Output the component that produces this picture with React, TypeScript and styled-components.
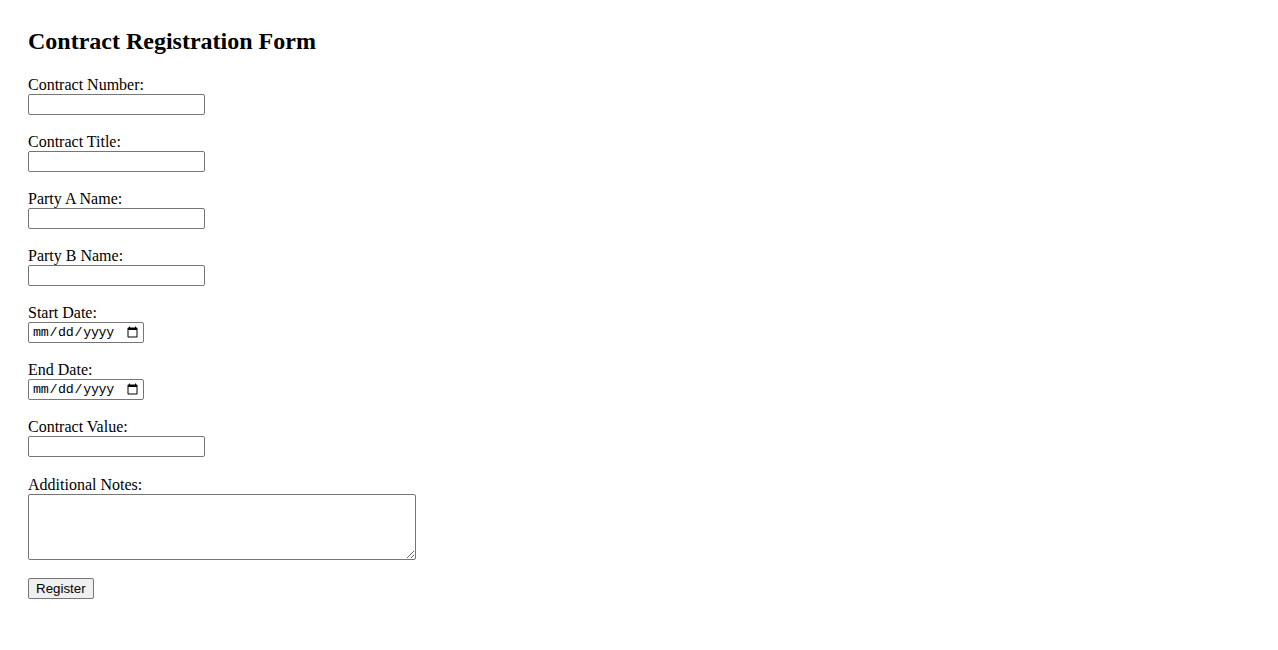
import React from "react";
import styled, { createGlobalStyle } from "styled-components";

const GlobalStyle = createGlobalStyle`
  html, body {
    background: #ffffff;
  }
  body {
    margin: 8px;
    font-family: "Liberation Serif", "Times New Roman", serif;
    font-size: 16px;
    color: #000000;
  }
`;

const Page = styled.div`
  padding: 20px;
`;

const Title = styled.h2`
  margin: 0 0 20.9px;
  font-size: 24px;
  font-weight: bold;
  line-height: normal;
`;

const Form = styled.form`
  display: flex;
  flex-direction: column;
  align-items: flex-start;
`;

const Field = styled.div`
  display: flex;
  flex-direction: column;
  align-items: flex-start;
  margin-bottom: 18.1px;
`;

const Label = styled.label`
  display: block;
  line-height: normal;
`;

const controlBase = `
  box-sizing: border-box;
  margin: 0;
  border: 1px solid #767676;
  border-radius: 2px;
  background: #ffffff;
  color: #000000;
  outline: none;
`;

const TextInput = styled.input`
  ${controlBase}
  width: 177px;
  height: 21px;
  padding: 1px 2px;
  font-family: "Liberation Sans", Arial, sans-serif;
  font-size: 13.333px;
`;

const DateInput = styled.input`
  ${controlBase}
  width: 116px;
  height: 21px;
  padding: 1px 2px 1px 3px;
  font-family: "Liberation Mono", "DejaVu Sans Mono", monospace;
  font-size: 13.333px;
  letter-spacing: -0.3px;
`;

const TextArea = styled.textarea`
  ${controlBase}
  width: 388px;
  height: 66px;
  padding: 2px;
  font-family: "Liberation Mono", monospace;
  font-size: 13.333px;
`;

const SubmitButton = styled.button`
  box-sizing: border-box;
  height: 21px;
  margin: 0;
  padding: 1px 7px;
  border: 1px solid #767676;
  border-radius: 2px;
  background: #efefef;
  color: #000000;
  font-family: "Liberation Sans", Arial, sans-serif;
  font-size: 13.333px;
  line-height: normal;
`;

const fields: { id: string; label: string; type: "text" | "date" }[] = [
  { id: "contractNumber", label: "Contract Number:", type: "text" },
  { id: "contractTitle", label: "Contract Title:", type: "text" },
  { id: "partyA", label: "Party A Name:", type: "text" },
  { id: "partyB", label: "Party B Name:", type: "text" },
  { id: "startDate", label: "Start Date:", type: "date" },
  { id: "endDate", label: "End Date:", type: "date" },
  { id: "contractValue", label: "Contract Value:", type: "text" },
];

export default function App() {
  return (
    <>
      <GlobalStyle />
      <Page>
        <Title>Contract Registration Form</Title>
        <Form onSubmit={(e) => e.preventDefault()}>
          {fields.map((f) => (
            <Field key={f.id}>
              <Label htmlFor={f.id}>{f.label}</Label>
              {f.type === "date" ? (
                <DateInput id={f.id} type="date" />
              ) : (
                <TextInput id={f.id} type="text" />
              )}
            </Field>
          ))}
          <Field>
            <Label htmlFor="notes">Additional Notes:</Label>
            <TextArea id="notes" />
          </Field>
          <SubmitButton type="submit">Register</SubmitButton>
        </Form>
      </Page>
    </>
  );
}
